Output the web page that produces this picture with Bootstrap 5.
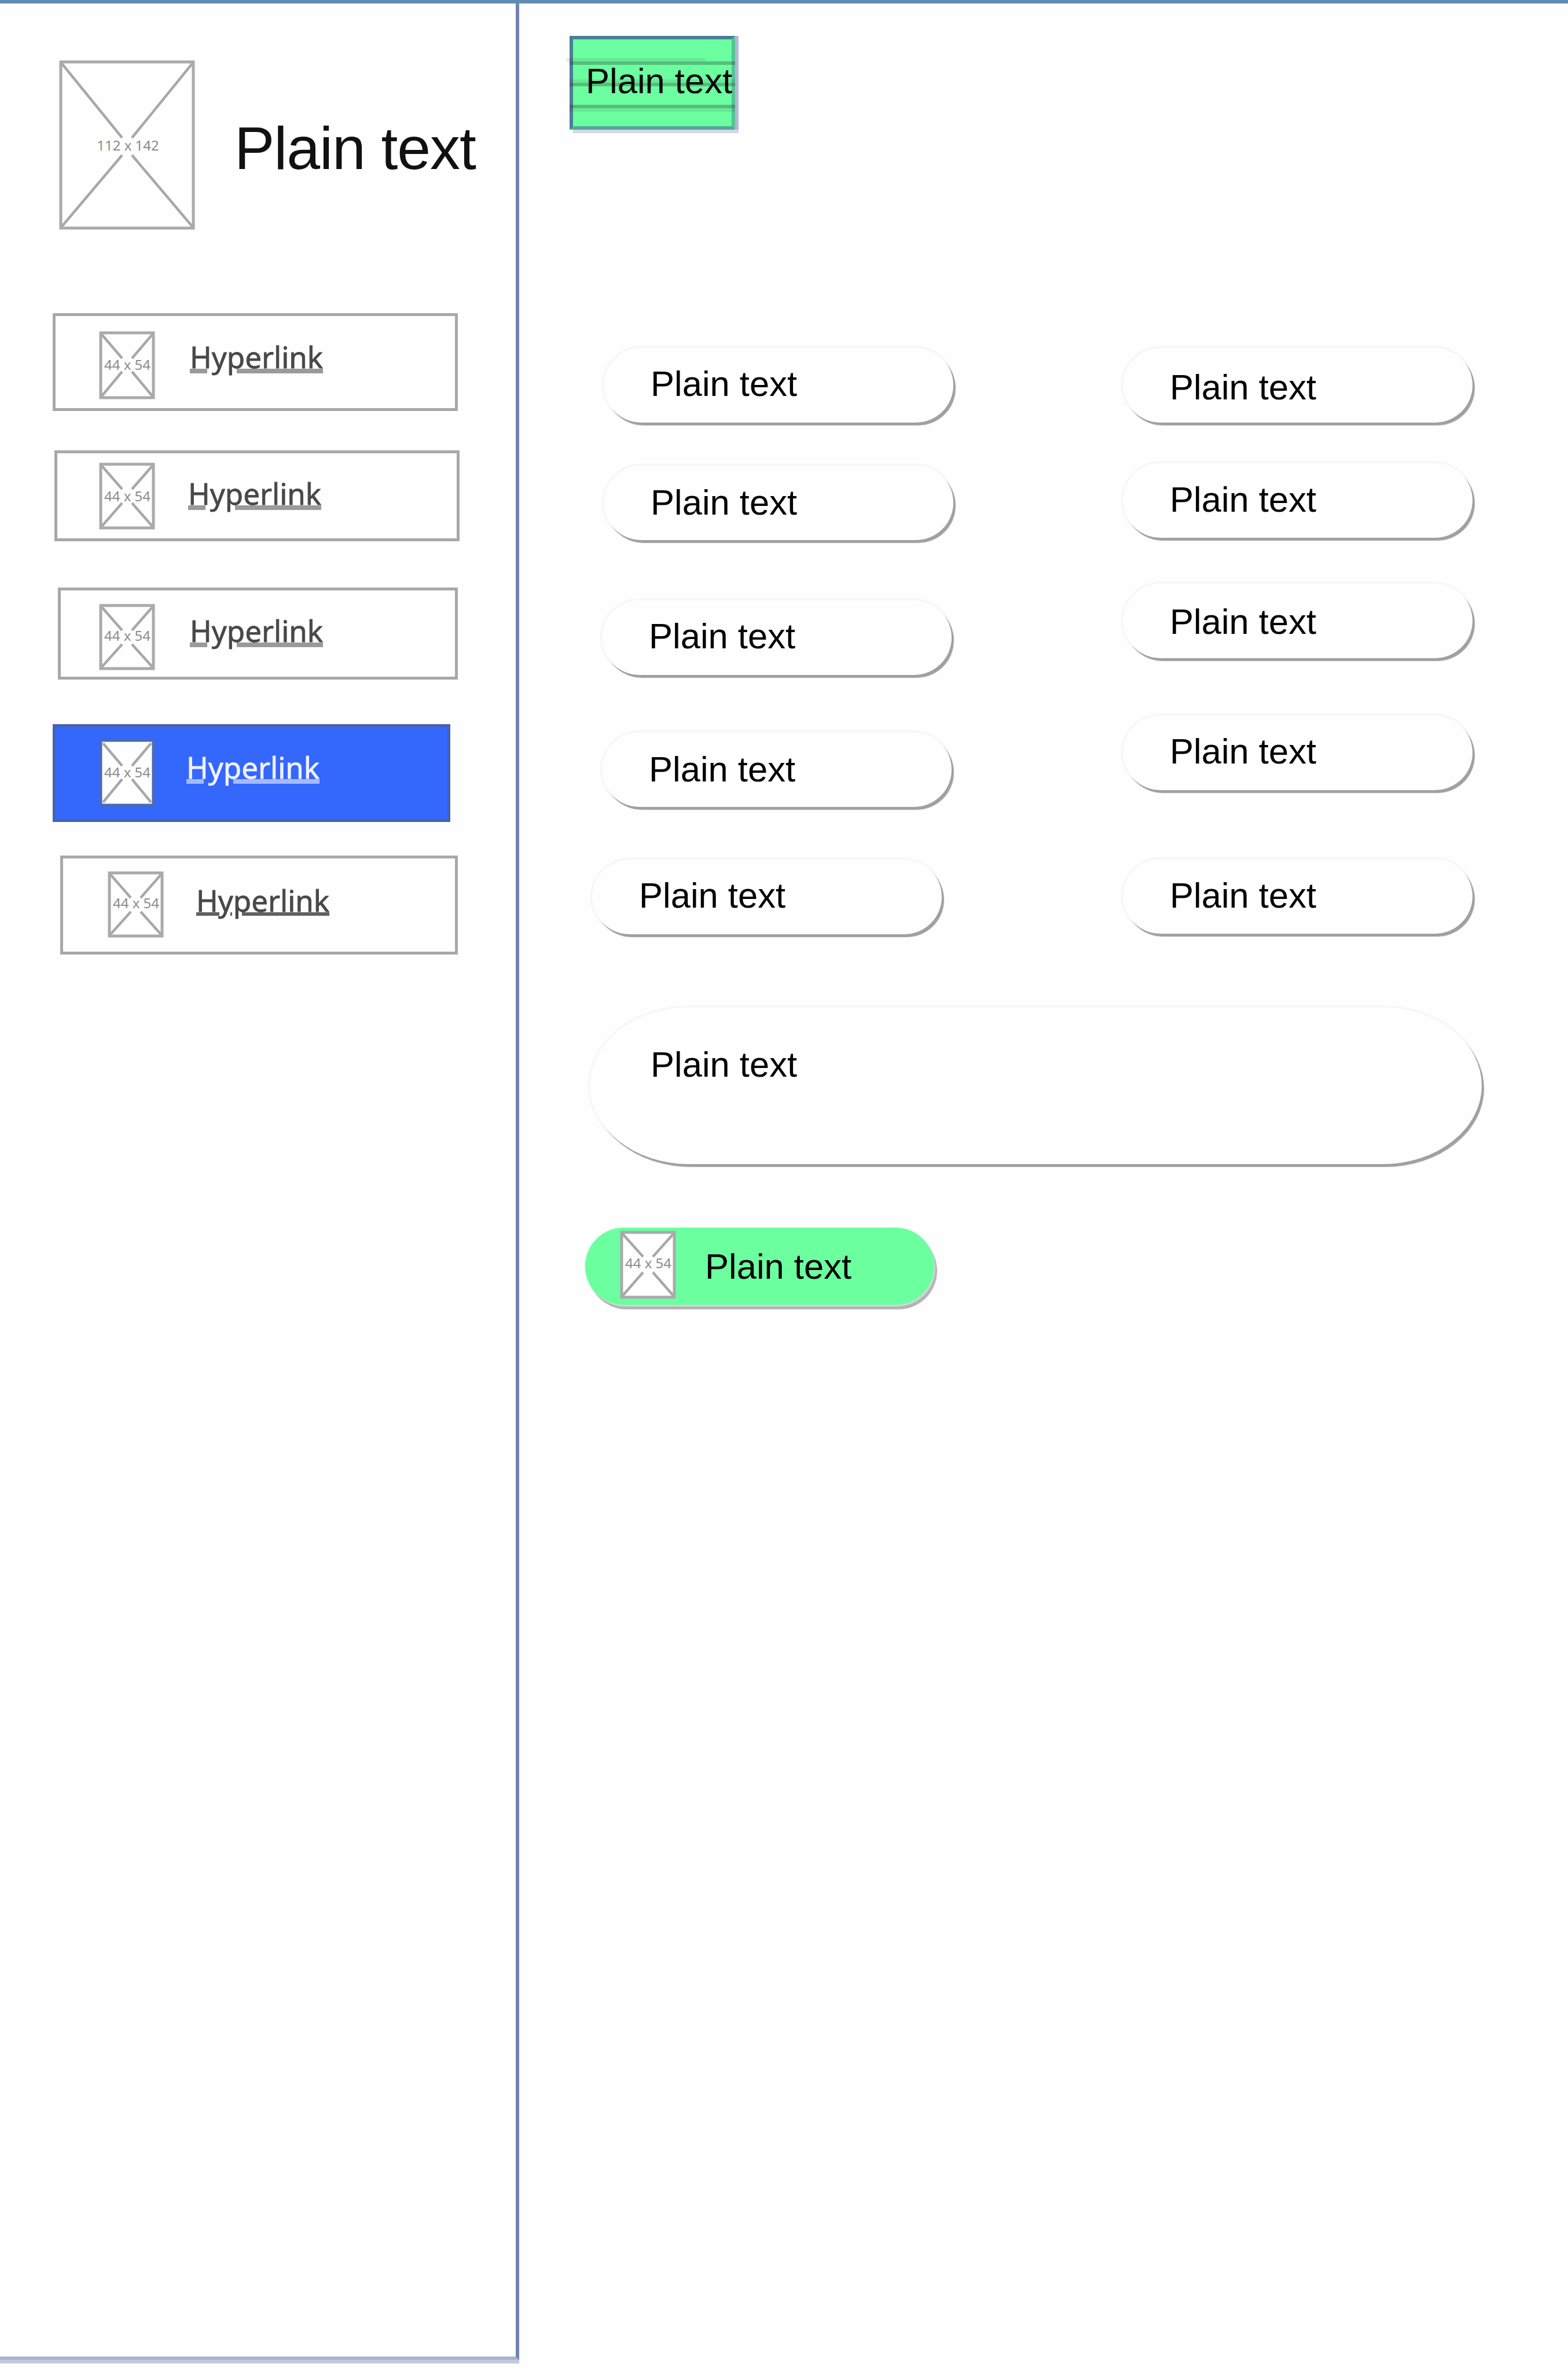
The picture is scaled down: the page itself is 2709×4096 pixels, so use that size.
<!DOCTYPE html>
<html lang="en">
<head>
<meta charset="utf-8">
<title>Wireframe</title>
<link href="https://cdn.jsdelivr.net/npm/bootstrap@5.3.0/dist/css/bootstrap.min.css" rel="stylesheet">
<style>
  body { background: #fefefe; color: #000; font-family: "Liberation Sans", Arial, sans-serif; }
  .page-shell { width: 2709px; height: 4096px; border-top: 6px solid #5f8bb0; overflow: hidden; }
  .side-panel { width: 897px; height: 4071px; border-right: 6px solid #7582b0; border-bottom: 6px solid #aab3ce; box-shadow: 0 6px 0 #c4cadd; }
  .brand-row { padding: 98px 0 0 102px; margin-bottom: 144px; }
  .brand-title { font-size: 104px; line-height: 1; font-weight: 400; margin: 100px 0 0 68px; letter-spacing: -1.1px; white-space: nowrap; color: #111; }
  .sketch { display: block; flex: none; overflow: visible; }
  .sketch rect { fill: #fefefe; stroke: #aaa; stroke-width: 5; }
  .sketch path { fill: none; stroke: #a8a8a8; stroke-width: 4.5; }
  .sketch text { font-family: "Noto Sans", sans-serif; font-size: 24px; fill: #8c8c8c; text-anchor: middle; }

  .side-link { border: 5px solid #a8a8a8; padding: 1px; color: #484848; font-family: "Noto Sans", sans-serif; font-size: 51px; line-height: 1; text-decoration: none; }
  .side-link span { position: relative; -webkit-text-stroke: .8px currentColor; text-decoration: underline; text-decoration-color: #9a9a9a; text-decoration-thickness: 8px; text-underline-offset: 1px; }
  .link-a { margin-left: 91px; width: 700px; height: 169px; }
  .link-a svg { margin: 25px 60px 0 74px; } .link-a span { margin-top: 44px; }
  .link-b { margin: 68px 0 0 94px; width: 700px; height: 157px; }
  .link-b svg { margin: 15px 57px 0 71px; } .link-b span { margin-top: 43px; }
  .link-c { margin: 80px 0 0 100px; width: 691px; height: 159px; }
  .link-c svg { margin: 22px 60px 0 65px; } .link-c span { margin-top: 43px; }
  .link-d { margin: 77px 0 0 91px; width: 687px; height: 169px; background: #3467fb; border-color: #4563b4; color: #eef1ff; }
  .link-d svg { margin: 19px 54px 0 74px; } .link-d span { margin-top: 43px; text-decoration-color: #a5b9ff; }
  .link-d .sketch rect { stroke: #4a6ab8; }
  .link-e { margin: 58px 0 0 104px; width: 687px; height: 171px; }
  .link-e svg { margin: 21px 56px 0 76px; } .link-e span { margin-top: 46px; text-decoration-color: #606060; text-decoration-thickness: 6px; }

  .label-text { font-size: 61.5px; line-height: 62px; white-space: nowrap; }
  .tag-box { width: 286px; height: 162px; margin: 56px 0 0 87px; padding: 41px 0 0 22px; background: #6bffa0; border: 6px solid #4b7d97; border-right-color: #54c297; border-bottom-color: #55a898; box-shadow: 6px 0 0 #b0b9d6, 6px 6px 0 #d0d7e6; }
  .tag-rules { left: -12px; top: -6px; }
  .pill-cols { margin-top: 377px; padding-left: 146px; }
  .pill { width: 604px; height: 129px; padding-left: 81px; background: #fefefe; box-shadow: 4px 5px 1px #a0a0a0, 0 0 1px 3px #f6f6f6; }
  .col-left { width: 604px; margin-right: 293px; }
  .l1 { padding-top: 31px; }
  .l2 { padding-top: 33px; margin-top: 74px; }
  .l3 { padding-top: 31px; margin: 104px 0 0 -3px; }
  .l4 { padding-top: 33px; margin: 99px 0 0 -3px; }
  .l5 { padding-top: 31px; margin: 91px 0 0 -20px; }
  .r1 { padding-top: 37px; }
  .r2 { padding-top: 32px; margin-top: 70px; }
  .r3 { padding-top: 35px; margin-top: 79px; }
  .r4 { padding-top: 31px; margin-top: 99px; }
  .r5 { padding-top: 32px; margin-top: 119px; }
  .pill-wide { width: 1541px; height: 271px; margin: 126px 0 0 122px; padding: 68px 0 0 105px; border-radius: 172px / 136px; }
  .pill-go { width: 603px; height: 133px; margin: 110px 0 0 114px; padding-left: 60px; background: #6bffa0; box-shadow: 2px 3px 0 #c8dccf, 5px 8px 1px #b4b4b4, 0 0 1px 2px #e8fbef; }
  .pill-go svg { margin-top: 5px; }
  .pill-go span { margin: 36px 0 0 50px; }
</style>
</head>
<body>
<div class="page-shell d-flex">
  <aside class="side-panel flex-shrink-0">
    <div class="brand-row d-flex align-items-start">
      <svg class="sketch" width="235" height="293" viewBox="0 0 235 293">
        <rect x="3" y="3" width="229" height="287"/>
        <path d="M5 6 109 134M230 6 126 134M109 164 5 287M126 164 230 287"/>
        <text x="119" y="156">112 x 142</text>
      </svg>
      <h1 class="brand-title">Plain text</h1>
    </div>
    <nav class="d-flex flex-column">
      <a href="#" class="side-link link-a d-flex align-items-start">
        <svg class="sketch" width="97" height="118" viewBox="0 0 97 118"><rect x="3" y="3" width="91" height="112"/><path d="M5 6 40 47M92 6 57 47M40 70 5 112M57 70 92 112"/><text x="49" y="67">44 x 54</text></svg>
        <span>Hyperlink</span>
      </a>
      <a href="#" class="side-link link-b d-flex align-items-start">
        <svg class="sketch" width="97" height="116" viewBox="0 0 97 116"><rect x="3" y="3" width="91" height="110"/><path d="M5 6 40 46M92 6 57 46M40 70 5 110M57 70 92 110"/><text x="49" y="67">44 x 54</text></svg>
        <span>Hyperlink</span>
      </a>
      <a href="#" class="side-link link-c d-flex align-items-start">
        <svg class="sketch" width="97" height="115" viewBox="0 0 97 115"><rect x="3" y="3" width="91" height="109"/><path d="M5 6 40 46M92 6 57 46M40 70 5 109M57 70 92 109"/><text x="49" y="64">44 x 54</text></svg>
        <span>Hyperlink</span>
      </a>
      <a href="#" class="side-link link-d d-flex align-items-start">
        <svg class="sketch" width="97" height="118" viewBox="0 0 97 118"><rect x="3" y="3" width="91" height="112"/><path d="M7 8 40 47M90 8 57 47M40 70 7 110M57 70 90 110"/><text x="49" y="67">44 x 54</text></svg>
        <span>Hyperlink</span>
      </a>
      <a href="#" class="side-link link-e d-flex align-items-start">
        <svg class="sketch" width="97" height="115" viewBox="0 0 97 115"><rect x="3" y="3" width="91" height="109"/><path d="M5 6 40 46M92 6 57 46M40 70 5 109M57 70 92 109"/><text x="49" y="64">44 x 54</text></svg>
        <span>Hyperlink</span>
      </a>
    </nav>
  </aside>

  <main class="flex-grow-1">
    <div class="tag-box position-relative">
      <svg class="tag-rules position-absolute" width="298" height="162" viewBox="0 0 298 162" fill="none" stroke="#333" stroke-opacity=".33" stroke-width="6">
        <path d="M6 47H292M6 84H292M6 122H292"/>
        <path d="M0 41H240M6 78H292M6 128H292" stroke-opacity=".1"/>
      </svg>
      <div class="label-text position-relative">Plain text</div>
    </div>

    <div class="pill-cols d-flex align-items-start">
      <div class="col-left">
        <div class="pill rounded-pill label-text l1">Plain text</div>
        <div class="pill rounded-pill label-text l2">Plain text</div>
        <div class="pill rounded-pill label-text l3">Plain text</div>
        <div class="pill rounded-pill label-text l4">Plain text</div>
        <div class="pill rounded-pill label-text l5">Plain text</div>
      </div>
      <div>
        <div class="pill rounded-pill label-text r1">Plain text</div>
        <div class="pill rounded-pill label-text r2">Plain text</div>
        <div class="pill rounded-pill label-text r3">Plain text</div>
        <div class="pill rounded-pill label-text r4">Plain text</div>
        <div class="pill rounded-pill label-text r5">Plain text</div>
      </div>
    </div>

    <div class="pill pill-wide label-text">Plain text</div>

    <div class="pill pill-go rounded-pill label-text d-flex align-items-start">
      <svg class="sketch" width="97" height="118" viewBox="0 0 97 118"><rect x="3" y="3" width="91" height="112"/><path d="M5 6 40 45M92 6 57 45M40 72 5 112M57 72 92 112"/><text x="49" y="65">44 x 54</text></svg>
      <span>Plain text</span>
    </div>
  </main>
</div>
<script src="https://cdn.jsdelivr.net/npm/bootstrap@5.3.0/dist/js/bootstrap.bundle.min.js"></script>
</body>
</html>
